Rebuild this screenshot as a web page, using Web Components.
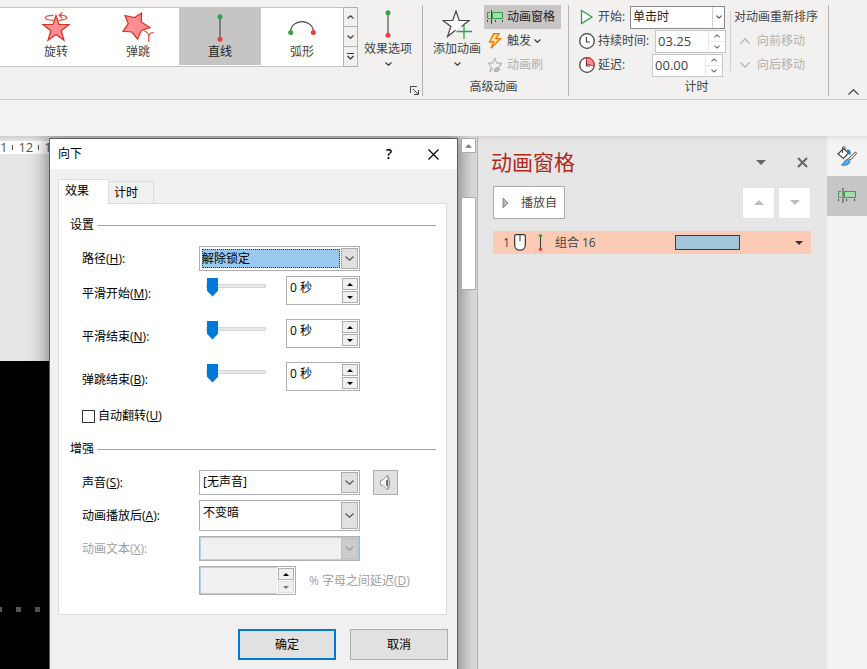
<!DOCTYPE html>
<html lang="zh-CN">
<head>
<meta charset="utf-8">
<title>动画窗格</title>
<style>
  html, body { height: 100%; margin: 0; }
  body {
    font: 12px/18px "Open Sans", "Noto Sans CJK SC", sans-serif;
    color: #444; background: #e6e6e6; overflow: hidden;
  }
</style>
</head>
<body>
<app-shell>
  <ribbon-bar slot="ribbon"></ribbon-bar>
  <slide-canvas><effect-dialog></effect-dialog></slide-canvas>
  <animation-pane></animation-pane>
  <tool-rail></tool-rail>
</app-shell>
<script>
const BASE = `<style>
  :host, *, *::before, *::after { box-sizing: border-box; }
  button, input, select, label { font: inherit; color: inherit; }
  button { border: 0; padding: 0; margin: 0; background: none; border-radius: 0; }
  input, select { margin: 0; border-radius: 0; min-width: 0; outline: 0; }
  svg { display: block; flex: none; fill: none; }
</style>`;

const chevDown = (c = '#444', w = 7, h = 4) => `<svg width="${w}" height="${h}" viewBox="0 0 7 4"><path d="M.5.5 3.5 3.3 6.5.5" stroke="${c}" stroke-width="1.2"/></svg>`;
const chevUp = (c = '#444', w = 7, h = 4) => `<svg width="${w}" height="${h}" viewBox="0 0 7 4"><path d="M.5 3.5 3.5.7 6.5 3.5" stroke="${c}" stroke-width="1.2"/></svg>`;
const thinDown = (c, w, h) => `<svg width="${w}" height="${h}" viewBox="0 0 ${w} ${h}"><path d="M.5.5 ${w / 2} ${h - 0.8} ${w - 0.5}.5" stroke="${c}" stroke-width="1.2"/></svg>`;
const thinUp = (c, w, h) => `<svg width="${w}" height="${h}" viewBox="0 0 ${w} ${h}"><path d="M.5 ${h - 0.5} ${w / 2} .8 ${w - 0.5} ${h - 0.5}" stroke="${c}" stroke-width="1.2"/></svg>`;
const triDown = (c, w = 10, h = 5) => `<svg width="${w}" height="${h}" viewBox="0 0 10 5"><path d="M0 0h10L5 5z" fill="${c}"/></svg>`;
const triUp = (c, w = 10, h = 5) => `<svg width="${w}" height="${h}" viewBox="0 0 10 5"><path d="M0 5h10L5 0z" fill="${c}"/></svg>`;

const ICONS = {
  spin: `<svg width="30" height="30" viewBox="0 0 30 30"><path d="M15 3.500 18 12.500H28L20.200 18.700 23 28.300 15 22.600 7 28.300 9.800 18.700 2 12.500H12z" fill="#ff8e93" stroke="#d93025" stroke-width="1.200"/><path d="M12.500 8.300C7 8 4.200 7 4.200 5.700c0-1.500 3.800-2.400 8.300-2.400M17.500 8.300c5-.2 8.300-1.300 8.300-2.700 0-1.300-2.500-2-6.500-2.400M21.500.6 18 3.200l3.500 3" stroke="#ec4a45" stroke-width="1.200"/></svg>`,
  bounce: `<svg width="32" height="32" viewBox="0 0 32 32"><path d="M3 5.500 12.500 7.500 19.500 3 19.300 12 28 17.500 19.300 20.500 15.700 29 9.700 22 .9 21.300 6.300 13.700z" fill="#ff8e93" stroke="#d93025" stroke-width="1.200"/><path d="M22 21c2.500.3 4.200 2.200 4.700 5.300M31.700 22.300c-2.800.2-4.600 1.700-5 4.200V32" stroke="#ec4a45" stroke-width="1.200"/></svg>`,
  line: `<svg width="6" height="28" viewBox="0 0 6 28"><path d="M3 3v22" stroke="#333"/><circle cx="3" cy="2.700" r="2.500" fill="#35a04a"/><circle cx="3" cy="25.300" r="2.500" fill="#ef3b36"/></svg>`,
  arc: `<svg width="28" height="28" viewBox="0 0 28 28"><path d="M2.500 18.500C2.500 4 25.500 4 25.500 18.500" stroke="#444" stroke-width="1.200"/><circle cx="2.700" cy="18.500" r="2.500" fill="#35a04a"/><circle cx="25.300" cy="18.500" r="2.500" fill="#ef3b36"/></svg>`,
  add: `<svg width="30" height="29" viewBox="0 0 30 29"><path d="M19.500 16.500 27 10.500H17.200L14 1 10.800 10.500H1L8.800 16.400 5.500 26.500 13.500 20.300" stroke="#444" stroke-width="1.200" fill="#fff"/><path d="M22 14v15M14.500 21.500H30" stroke="#35a04a" stroke-width="1.300"/></svg>`,
  pane: `<svg width="18" height="14" viewBox="0 0 18 14"><path d="M4 2.500H1.500v6H4" stroke="#35a04a"/><path d="M6.500 2.500h10v6h-10z" fill="#a3dcae" stroke="#2f9e4a"/><path d="M5.500 0v14" stroke="#444"/><path d="M1.500 10v2M9.500 10v2M16.500 10v2" stroke="#444"/></svg>`,
  bolt: `<svg width="14" height="16" viewBox="0 0 14 16"><path d="M5.500.7H11L8 5.600h4.500L3 15.300 5.600 9H1.500z" fill="#ffdc8a" stroke="#e8780c" stroke-width="1.300"/></svg>`,
  brush: `<svg width="16" height="16" viewBox="0 0 16 16"><path d="M6 11 3 14.800 4.200 9.500.9 6.100H5.700L7.700 1 9.700 6.100H15L12 9" stroke="#a9a9a9"/><path d="M7.500 14.500c-.5-3 1.200-4 3-4s3 1.500 1.500 3-2.700 1.500-4.500 1zM11.500 10.500l3-3.500" fill="#bbb" stroke="#a9a9a9"/></svg>`,
  play: `<svg width="14" height="16" viewBox="0 0 14 16"><path d="M1.500 1.500 12 8 1.500 14.500z" stroke="#2f9e4a" stroke-width="1.300" fill="#fff"/></svg>`,
  clock: `<svg width="16" height="16" viewBox="0 0 16 16"><circle cx="8" cy="8" r="7.300" fill="#fff" stroke="#444" stroke-width="1.300"/><path d="M7.500 4v5H11" stroke="#444" stroke-width="1.200"/></svg>`,
  delay: `<svg width="16" height="16" viewBox="0 0 16 16"><circle cx="8" cy="8" r="7.300" fill="#fff" stroke="#444" stroke-width="1.300"/><path d="M7.500.7a7.500 7.500 0 0 1 7.800 8.300L7.500 7z" fill="#ff8e93" stroke="#d93025"/><path d="M7.500 4v5H11" stroke="#444" stroke-width="1.200"/></svg>`
};

function define(name, html) {
  const tpl = document.createElement('template');
  customElements.define(name, class extends HTMLElement {
    connectedCallback() {
      if (this.shadowRoot) return;
      const root = this.attachShadow({ mode: 'open' });
      tpl.innerHTML = BASE + (typeof html === 'function' ? html(this) : html);
      root.append(tpl.content.cloneNode(true));
    }
  });
}

define('app-shell', `<style>
  :host { display: flex; flex-direction: column; height: 100vh; }
  .strip { flex: none; height: 36px; background: #f3f2f0; }
  main { flex: 1; display: flex; min-height: 0; }
</style><slot name="ribbon"></slot><div class="strip"></div><main><slot></slot></main>`);

/* ---------- ribbon ---------- */

define('gallery-item', el => `<style>
  :host { display: block; flex: none; width: 82px; }
  button { width: 100%; height: 57px; display: grid; grid-template-rows: 34px 20px; justify-items: center; align-content: start; align-items: end; line-height: 20px; }
  :host([selected]) button { background: #c5c5c5; color: #222; }
</style><button type="button">${ICONS[el.getAttribute('icon')]}<span><slot></slot></span></button>`);

define('big-button', el => `<style>
  :host { display: block; flex: none; }
  button { display: grid; grid-template-rows: 30px 20px 10px; justify-items: center; align-items: center; padding-top: 4px; }
</style><button type="button">${ICONS[el.getAttribute('icon')]}<span><slot></slot></span>${chevDown()}</button>`);

define('small-button', el => `<style>
  :host { display: block; }
  button { display: flex; align-items: center; gap: 3px; height: 24px; padding: 0 6px 0 2px; white-space: nowrap; }
  :host([pressed]) button { background: #c8c6c4; color: #222; }
  :host([disabled]) button { color: #b1b0ae; }
  .ic { display: grid; place-items: center; width: 18px; }
</style><button type="button"${el.hasAttribute('disabled') ? ' disabled' : ''}><span class="ic">${ICONS[el.getAttribute('icon')]}</span><slot></slot>${el.hasAttribute('menu') ? chevDown() : ''}</button>`);

define('ribbon-group', el => `<style>
  :host { display: flex; flex-direction: column; flex: none; height: 91px; border-right: 1px solid #b5b3b1; }
  .body { height: 75px; display: flex; }
  .cap { text-align: center; line-height: 18px; padding-right: 4px; }
</style><div class="body"><slot></slot></div><div class="cap">${el.getAttribute('caption') || ''}</div>`);

define('time-field', el => `<style>
  :host { display: flex; align-items: center; height: 24px; gap: 3px; }
  .box { display: flex; width: 71px; height: 23px; border: 1px solid #c8c6c4; background: #fff; }
  input { flex: 1; width: 0; border: 0; padding: 0 2px; background: none; font-size: 13px; }
  .spin { width: 17px; display: grid; grid-template-rows: 1fr 1fr; }
  .spin button { display: grid; place-items: center; border-left: 1px solid #e8e8e8; }
  .spin button + button { border-top: 1px solid #e8e8e8; }
  label { white-space: nowrap; width: var(--label, auto); }
</style>${ICONS[el.getAttribute('icon')]}<label for="f">${el.getAttribute('label')}</label>
<div class="box"><input id="f" value="${el.getAttribute('value')}"><span class="spin">
<button type="button" aria-label="增加">${chevUp('#666', 6, 4)}</button><button type="button" aria-label="减少">${chevDown('#666', 6, 4)}</button></span></div>`);

define('start-field', `<style>
  :host { display: flex; align-items: center; height: 24px; gap: 3px; }
  label { width: 29px; white-space: nowrap; }
  .box { position: relative; width: 95px; height: 23px; }
  select { appearance: none; width: 100%; height: 100%; border: 1px solid #8a8886; background: #fff; padding: 0 2px; color: #222; }
  .arrow { position: absolute; right: 1px; top: 1px; bottom: 1px; width: 12px; border-left: 1px solid #d0d0d0; display: grid; place-items: center; pointer-events: none; }
  .ic { width: 16px; display: grid; place-items: center; }
</style><span class="ic">${ICONS.play}</span><label for="s">开始:</label>
<div class="box"><select id="s"><option>单击时</option></select><span class="arrow">${chevDown('#444', 6, 4)}</span></div>`);

define('ribbon-bar', `<style>
  :host { display: flex; height: 101px; padding-top: 5px; flex: none; background: #f3f1f0; border-bottom: 2px solid #d2d0ce; margin-bottom: -1px; }
  .top { display: flex; }
  .gallery { display: flex; height: 60px; margin-top: 2px; padding-left: 15px; background: #fff; border: 1px solid #c8c6c4; border-left: 0; border-right: 0; }
  .scroll { display: grid; grid-template-rows: repeat(3, 1fr); width: 15px; height: 60px; margin-top: 2px; margin-right: 6px; }
  .scroll button { display: grid; place-items: center; border: 1px solid #b5b3b1; }
  .scroll button + button { border-top: 0; }
  .top big-button { padding-right: 10px; }
  .launch { display: flex; justify-content: flex-end; padding: 17px 3px 0 0; }
  .anim { display: flex; flex-direction: column; }
  .adv { display: flex; gap: 3px; padding: 0 7px 0 10px; }
  .times { display: flex; flex-direction: column; padding-left: 10px; }
  .order { display: flex; flex-direction: column; margin-left: 4px; padding: 0 10px 0 4px; position: relative; }
  .order::before { content: ""; position: absolute; left: 0; top: 6px; height: 60px; border-left: 1px solid #d2d0ce; }
  .order span, .order button { height: 24px; display: flex; align-items: center; white-space: nowrap; }
  .order button { gap: 7px; padding-left: 6px; color: #b1b0ae; }
  .collapse { margin-left: auto; align-self: flex-end; padding: 4px 8px; }
  time-field.d { --label: 54px; }
  time-field.e { --label: 51px; }
</style>
<ribbon-group>
  <div class="anim">
    <div class="top">
      <div class="gallery">
        <gallery-item icon="spin">旋转</gallery-item>
        <gallery-item icon="bounce">弹跳</gallery-item>
        <gallery-item icon="line" selected>直线</gallery-item>
        <gallery-item icon="arc">弧形</gallery-item>
      </div>
      <div class="scroll">
        <button type="button" aria-label="上一行">${chevUp()}</button>
        <button type="button" aria-label="下一行">${chevDown()}</button>
        <button type="button" aria-label="更多"><svg width="7" height="7" viewBox="0 0 7 7"><path d="M0 .5h7M.5 3 3.500 6 6.500 3" stroke="#333" stroke-width="1.200"/></svg></button>
      </div>
      <big-button icon="line">效果选项</big-button>
    </div>
    <div class="launch"><button type="button" aria-label="动画选项"><svg width="9" height="9" viewBox="0 0 9 9"><path d="M.5 7V.5H7M3 3l5 5M8.500 4v4.500H4" stroke="#444"/></svg></button></div>
  </div>
</ribbon-group>
<ribbon-group caption="高级动画">
  <div class="adv">
    <big-button icon="add">添加动画</big-button>
    <div>
      <small-button icon="pane" pressed>动画窗格</small-button>
      <small-button icon="bolt" menu>触发</small-button>
      <small-button icon="brush" disabled>动画刷</small-button>
    </div>
  </div>
</ribbon-group>
<ribbon-group caption="计时">
  <div class="times">
    <start-field></start-field>
    <time-field class="d" icon="clock" label="持续时间:" value="03.25"></time-field>
    <time-field class="e" icon="delay" label="延迟:" value="00.00"></time-field>
  </div>
  <div class="order">
    <span>对动画重新排序</span>
    <button type="button" disabled>${thinUp('#b1b0ae', 10, 6)}向前移动</button>
    <button type="button" disabled>${thinDown('#b1b0ae', 10, 6)}向后移动</button>
  </div>
</ribbon-group>
<button class="collapse" type="button" aria-label="折叠功能区">${thinUp('#444', 11, 6)}</button>`);

/* ---------- slide canvas ---------- */

define('slide-canvas', `<style>
  :host { display: flex; flex: 1; min-width: 0; position: relative; overflow: hidden; background: #e6e6e6; }
  .stage { flex: 1; display: flex; flex-direction: column; overflow: hidden; padding-top: 5px; background: linear-gradient(#cfcfcf, #e6e6e6 5px); }
  .ruler { height: 13px; background: #fff; display: flex; align-items: center; gap: 5px; color: #555; font-size: 13px; line-height: 13px; flex: none; }
  .ruler i { width: 1px; height: 5px; background: #555; }
  .slide { flex: 1; margin-top: 207px; background: #000; padding-top: 246px; }
  .dots { display: flex; gap: 14px; margin-left: -3px; }
  .dots i { width: 5px; height: 5px; background: #555; }
  .bar { flex: none; width: 21px; padding: 2px 1px 0 4px; border-right: 1px solid #b5b5b5; background: #dcdcdc; }
  .bar button, .thumb { position: relative; z-index: 1; background: #fff; border: 1px solid #ababab; width: 15px; }
  .bar button { display: grid; place-items: center; height: 15px; }
  .thumb { height: 93px; margin-top: 44px; }
</style>
<div class="stage"><div class="ruler"><span>1</span><i></i><span>12</span><i></i><span>1</span></div>
<div class="slide"><div class="dots"><i></i><i></i><i></i></div></div></div>
<div class="bar"><button type="button" aria-label="向上滚动">${triUp('#777', 7, 4)}</button><div class="thumb"></div></div>
<slot></slot>`);

/* ---------- dialog controls ---------- */

define('unit-spin', el => `<style>
  :host { display: flex; height: 29px; width: 74px; border: 1px solid #adadb3; background: #fff; color: #000; }
  input { flex: 1; width: 0; border: 0; padding: 0 3px 6px; background: none; }
  .b { width: 18px; padding: 1px; display: grid; grid-template-rows: 12px 12px; gap: 1px; }
  .b button { display: grid; place-items: center; background: #f0f0f0; border: 1px solid #adadad; }
  :host([off]) { width: 97px; }
  :host([off]) input { background: #f0f0f0; border: 1px solid #b4cfec; border-right: 0; }
  :host([off]) .b button + button { border-color: #dcdcdc; }
</style><input aria-label="${el.getAttribute('label')}" value="${el.getAttribute('value') || ''}"${el.hasAttribute('off') ? ' disabled' : ''}>
<span class="b"><button type="button" aria-label="增加">${triUp('#000', 6, 3)}</button><button type="button" aria-label="减少">${triDown(el.hasAttribute('off') ? '#777' : '#000', 6, 3)}</button></span>`);

const accel = el => `${el.getAttribute('label')}(<u>${el.getAttribute('key')}</u>)`;

define('slider-row', el => `<style>
  :host { display: grid; grid-template-columns: 124px 80px auto; justify-content: start; }
  label { padding-top: 9px; }
  input { appearance: none; width: 60px; height: 19px; background: none; }
  input::-webkit-slider-runnable-track { height: 4px; background: #e7eaea; border: 1px solid #d6d6d6; }
  input::-webkit-slider-thumb { appearance: none; width: 11px; height: 19px; margin-top: -7px; background: #0078d7; clip-path: polygon(0 0, 100% 0, 100% 70%, 50% 100%, 0 70%); }
</style><label for="r">${accel(el)}:</label><input id="r" type="range" value="0"><unit-spin label="${el.getAttribute('label')}" value="0 秒"></unit-spin>`);

define('select-row', el => `<style>
  :host { display: grid; grid-template-columns: 104px 161px auto; column-gap: 13px; justify-content: start; --h: 25px; }
  :host([tall]) { --h: 31px; }
  label { align-self: center; white-space: nowrap; }
  .box { position: relative; height: var(--h); }
  select { appearance: none; width: 100%; height: 100%; border: 1px solid #adadb3; background: #fff; padding: 0 20px 2px 3px; color: #000; opacity: 1; }
  :host([tall]) select { padding-bottom: 6px; }
  .a { position: absolute; right: 2px; top: 2px; bottom: 2px; width: 17px; display: grid; place-items: center; background: #e1e1e1; border: 1px solid #adadad; pointer-events: none; }
  :host([focused]) select { background: #99c9ef content-box; box-shadow: inset 0 0 0 1px #fff; padding: 2px 19px 2px 2px; }
  :host([focused]) .box::after { content: ""; position: absolute; left: 3px; right: 20px; top: 3px; bottom: 3px; border: 1px dotted #333; pointer-events: none; }
  :host([off]) { color: #a0a0a0; }
  :host([off]) select { background: #f0f0f0; box-shadow: inset 0 0 0 1px #b4cfec; }
  :host([off]) .a { background: #ccc; border-color: #c0c0c0; }
</style><label for="s">${accel(el)}:</label><div class="box"><select id="s"${el.hasAttribute('off') ? ' disabled' : ''}><option>${el.getAttribute('value') || ''}</option></select><span class="a">${thinDown(el.hasAttribute('off') ? '#a0a0a0' : '#555', 9, 5)}</span></div><slot></slot>`);

define('field-group', el => `<style>
  :host { display: block; }
  h2 { margin: 0; font: inherit; display: flex; align-items: center; gap: 4px; }
  h2::after { content: ""; flex: 1; height: 1px; background: #a0a0a0; }
  .in { padding-left: 12px; display: flex; flex-direction: column; }
</style><h2>${el.getAttribute('heading')}</h2><div class="in"><slot></slot></div>`);

define('effect-dialog', `<style>
  :host { position: absolute; left: 49px; top: 2px; width: 409px; height: 560px; color: #000; background: #f0f0f0; border: 1px solid #5f5f5f; box-shadow: 0 1px 16px 3px rgba(0,0,0,.42); }
  header { display: flex; align-items: center; height: 30px; background: #fff; padding: 0 18px 0 8px; }
  header span { flex: 1; }
  header .q { font-size: 14px; margin-right: 36px; font-weight: 600; }
  nav { display: flex; align-items: flex-end; padding: 10px 0 0 8px; height: 35px; }
  nav button { border: 1px solid #dcdcdc; border-bottom: 0; text-align: left; padding-left: 6px; }
  nav .on { background: #fff; width: 51px; height: 25px; padding-bottom: 2px; z-index: 1; }
  nav .off { width: 45px; height: 22px; margin-bottom: 1px; border-left: 0; padding-left: 5px; }
  .panel { margin: -1px 10px 0 8px; border: 1px solid #dcdcdc; background: #fff; padding: 12px 10px 19px 11px; }
  .rows { display: flex; flex-direction: column; gap: 14px; margin: 5px 0 16px; }
  .first { margin-top: 12px; }
  .chk { display: flex; align-items: center; gap: 3px; }
  .chk input { appearance: none; width: 13px; height: 13px; border: 1px solid #333; background: #fff; }
  .second { margin-top: 15px; }
  .opts { display: flex; flex-direction: column; gap: 5px; margin-top: 12px; }
  .snd { width: 25px; height: 25px; background: #e1e1e1; border: 1px solid #adadad; display: grid; place-items: center; }
  .pct { display: flex; align-items: center; gap: 13px; padding-left: 117px; color: #a0a0a0; }
  footer { display: flex; justify-content: flex-end; gap: 14px; padding: 14px 9px 0; }
  footer button { width: 98px; height: 31px; background: #e1e1e1; border: 1px solid #adadad; }
  footer .ok { border: 2px solid #0078d7; }
</style>
<header><span>向下</span><button class="q" type="button" aria-label="帮助">?</button>
<button type="button" aria-label="关闭"><svg width="11" height="11" viewBox="0 0 11 11"><path d="M.5.5l10 10M10.500.5l-10 10" stroke="#000" stroke-width="1.200"/></svg></button></header>
<nav><button class="on" type="button">效果</button><button class="off" type="button">计时</button></nav>
<div class="panel">
  <field-group heading="设置">
    <select-row class="first" label="路径" key="H" value="解除锁定" focused></select-row>
    <div class="rows">
      <slider-row label="平滑开始" key="M"></slider-row>
      <slider-row label="平滑结束" key="N"></slider-row>
      <slider-row label="弹跳结束" key="B"></slider-row>
    </div>
    <div class="chk"><input type="checkbox" id="rev"><label for="rev">自动翻转(<u>U</u>)</label></div>
  </field-group>
  <field-group class="second" heading="增强">
    <div class="opts">
      <select-row label="声音" key="S" value="[无声音]"><button class="snd" type="button" aria-label="音量"><svg width="14" height="18" viewBox="0 0 14 18"><path d="M1.500 6.500 4 6 8.500 1v15L4 11.500l-2.500-.5z" fill="#f8f8f8" stroke="#999"/><path d="M8.500 1.500c2.700 3.500 2.700 11 0 14.500" fill="#ddd" stroke="#888"/><path d="M8 6v6" stroke="#444" stroke-width="1.400"/></svg></button></select-row>
      <select-row tall label="动画播放后" key="A" value="不变暗"></select-row>
      <select-row off label="动画文本" key="X"></select-row>
      <div class="pct"><unit-spin off label="字母之间延迟"></unit-spin><span>% 字母之间延迟(<u>D</u>)</span></div>
    </div>
  </field-group>
</div>
<footer><button class="ok" type="button">确定</button><button type="button">取消</button></footer>`);

/* ---------- animation pane ---------- */

define('animation-pane', `<style>
  :host { display: block; flex: none; width: 349px; padding: 12px 16px 0 15px; background: linear-gradient(#d4d4d4, #e6e6e6 5px); }
  header { display: flex; align-items: center; height: 28px; padding-right: 3px; margin-left: -2px; }
  h1 { flex: 1; margin: 0; font-size: 21px; line-height: 28px; font-weight: 400; color: #b0281a; }
  header button { margin-left: 31px; }
  .bar { display: flex; gap: 3px; margin-top: 10px; align-items: center; height: 33px; }
  .play { width: 72px; height: 33px; margin-right: auto; background: #fff; border: 1px solid #ababab; display: flex; align-items: center; gap: 12px; padding-left: 8px; }
  .mv { width: 33px; height: 32px; background: #fff; border: 1px solid #e1e1e1; display: grid; place-items: center; }
  .item { display: flex; align-items: center; height: 23px; margin-top: 12px; background: #fbcbb5; padding: 0 8px 0 10px; }
  .item .mouse { margin-left: 4px; }
  .item .path { margin-left: 12px; }
  .item .name { margin-left: 12px; flex: 1; }
  .time { width: 65px; height: 15px; background: #a1c5d9; border: 1px solid #24435f; margin-right: 55px; }
</style>
<header><h1>动画窗格</h1><button type="button" aria-label="任务窗格选项">${triDown('#666')}</button>
<button type="button" aria-label="关闭"><svg width="11" height="11" viewBox="0 0 11 11"><path d="M1 1l9 9M10 1l-9 9" stroke="#666" stroke-width="2"/></svg></button></header>
<div class="bar"><button class="play" type="button"><svg width="7" height="12" viewBox="0 0 7 12"><path d="M1 1 6 6 1 11z" fill="#b5b5b5" stroke="#8a8a8a"/></svg>播放自</button>
<button class="mv" type="button" aria-label="上移" disabled>${triUp('#bcbcbc')}</button><button class="mv" type="button" aria-label="下移" disabled>${triDown('#bcbcbc')}</button></div>
<div class="item"><span>1</span>
<svg class="mouse" width="12" height="17" viewBox="0 0 12 17"><path d="M.7 2Q.7.700 2 .7h8q1.300 0 1.300 1.300v9c0 7-10.600 7-10.600 0z" fill="#fff" stroke="#333" stroke-width="1.200"/><path d="M6 1v6" stroke="#333"/></svg>
<svg class="path" width="5" height="17" viewBox="0 0 5 17"><path d="M2.500 1v15" stroke="#333"/><circle cx="2.500" cy="1.800" r="1.700" fill="#35a04a"/><circle cx="2.500" cy="15.200" r="1.700" fill="#ef3b36"/></svg>
<span class="name">组合 16</span><span class="time"></span><button type="button" aria-label="效果菜单">${triDown('#333', 8, 4)}</button></div>`);

define('tool-rail', `<style>
  :host { display: flex; flex-direction: column; flex: none; width: 40px; background: linear-gradient(#e2e2e2, #f3f3f3 5px); }
  button { height: 40px; display: grid; place-items: center; }
  .on { background: #c6c6c6; }
</style>
<button type="button" aria-label="设置格式"><svg width="20" height="20" viewBox="0 0 20 20"><path d="M1 8 6.500 2.500 11.500 7 6.500 12.500z" fill="#fff" stroke="#444" stroke-width="1.200"/><path d="M5.500 7V2C5.500 0 8 0 8 2v2" stroke="#444"/><path d="M10 4.500c2.300-.5 3 1.500 2.500 4" stroke="#1f74c4" stroke-width="2"/><path d="M18.500 6 19.500 7.500 13.500 14 11.500 12.500z" fill="#fff" stroke="#444"/><path d="M10.500 13 13 15.500c-1 3.500-4.500 4-8.500 3.500 2.500-1 2.500-4.500 6-6z" fill="#5aaee8" stroke="#1f74c4"/></svg></button>
<button class="on" type="button" aria-label="动画窗格"><svg width="20" height="16" viewBox="0 0 20 16"><path d="M4 3.500H1.500v6H4" stroke="#35a04a"/><path d="M7.500 3.500h11v6h-11z" fill="#a3dcae" stroke="#2f9e4a"/><path d="M6 0v15" stroke="#444"/><path d="M1.500 11v2M9.500 11v2M17.500 11v2" stroke="#444"/></svg></button>`);
</script>
</body>
</html>
